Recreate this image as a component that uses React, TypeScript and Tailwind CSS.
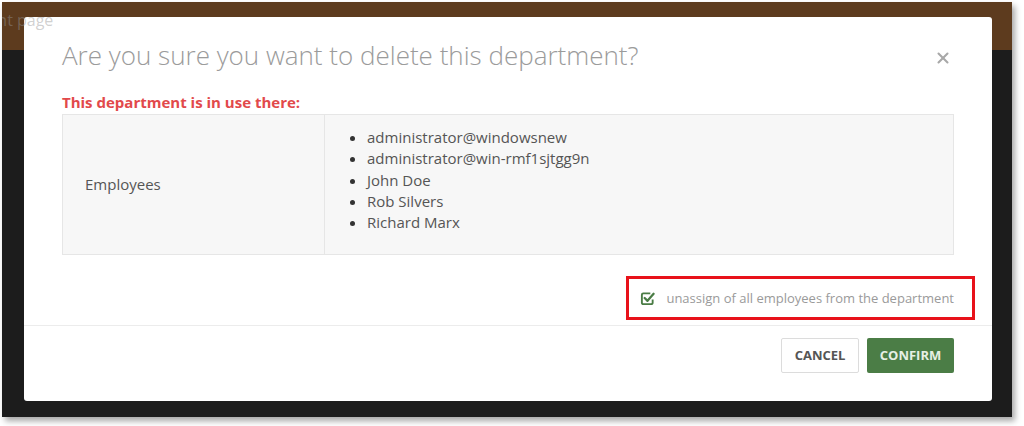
import { Check, X } from "lucide-react"

const employees = [
  "administrator@windowsnew",
  "administrator@win-rmf1sjtgg9n",
  "John Doe",
  "Rob Silvers",
  "Richard Marx",
]

const DeleteDepartmentModal = () => {
  return (
    <div className="absolute left-[22px] top-[15px] flex h-[384px] w-[968px] flex-col rounded-[3px] bg-white">
      <div className="flex items-start justify-between pl-[38px] pr-[40px] pt-[21px]">
        <h2 className="text-[26px] font-light leading-[35px] text-[#9b9b9b]">
          Are you sure you want to delete this department?
        </h2>
        <X className="mt-[11px] h-[18px] w-[18px] text-[#a8a8a8]" strokeWidth={2.75} />
      </div>

      <div className="px-[38px] pt-[19px]">
        <p className="text-[15px] font-bold leading-[20px] text-[#e2494b]">
          This department is in use there:
        </p>
        <div className="mt-[2px] grid grid-cols-[262px_1fr] border border-[#e6e6e6] bg-[#f7f7f7]">
          <div className="flex items-center border-r border-[#e6e6e6] pl-[22px] text-[15px] text-[#555]">
            Employees
          </div>
          <ul className="list-disc pb-[21px] pl-[42px] pt-[12px] text-[15px] leading-[21.3px] text-[#555] marker:text-[#333]">
            {employees.map((name) => (
              <li key={name}>{name}</li>
            ))}
          </ul>
        </div>
      </div>

      <div className="flex justify-end pr-[17px] pt-[21px]">
        <label className="flex h-[44px] items-center gap-[11px] border-[3px] border-[#e8121a] pl-[11px] pr-[18px]">
          {/* check-square: the tick runs past the box's top-right corner */}
          <svg viewBox="0 0 16 16" className="h-[15px] w-[15px]" fill="none" stroke="#4a7c45">
            <path d="M11 2.5H3.5a1.5 1.5 0 0 0-1.5 1.5v8.5a1.5 1.5 0 0 0 1.5 1.5H12a1.5 1.5 0 0 0 1.5-1.5V9" strokeWidth="2" />
            <path d="M5 7.5l3 3 6.5-7.5" strokeWidth="2.4" strokeLinecap="round" strokeLinejoin="round" />
          </svg>
          <span className="text-[13px] text-[#9a9a9a]">unassign of all employees from the department</span>
        </label>
      </div>

      <div className="mt-[5px] flex justify-end gap-[8px] border-t border-[#ececec] px-[38px] pt-[12px]">
        <button className="h-[35px] w-[78px] rounded-[2px] border border-[#dcdcdc] bg-white text-[13px] font-bold text-[#555]">
          CANCEL
        </button>
        <button className="h-[35px] w-[87px] rounded-[2px] bg-[#4b7d46] text-[13px] font-bold text-[#e6efe4]">
          CONFIRM
        </button>
      </div>
    </div>
  )
}

export default function App() {
  return (
    <div
      className="h-[426px] w-[1024px] bg-white pl-[2px] pt-[2px]"
      style={{ fontFamily: '"Open Sans", sans-serif' }}
    >
      <div className="relative h-[415px] w-[1010px] overflow-hidden bg-[#1c1c1c] shadow-[3px_4px_6px_rgba(0,0,0,0.35)]">
        <div className="h-[48px] bg-[#5d3b1e]" />
        <DeleteDepartmentModal />
        <span className="absolute left-[-80px] top-[6px] z-10 text-[16px] text-[rgba(150,150,150,0.45)]">
          Department page
        </span>
      </div>
    </div>
  )
}
